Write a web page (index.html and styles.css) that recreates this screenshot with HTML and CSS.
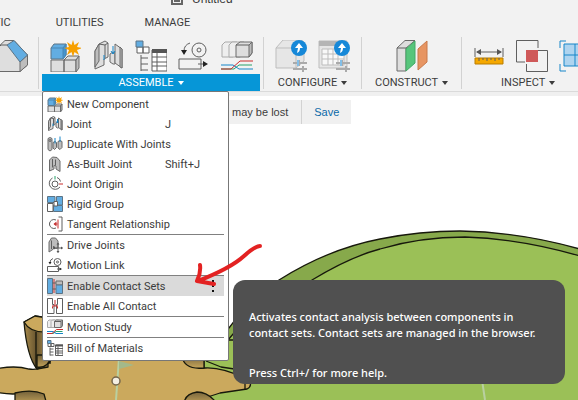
FILE: index.html
```html
<!DOCTYPE html>
<html lang="en">
<head>
<meta charset="utf-8">
<title>Untitled</title>
<meta name="viewport" content="width=device-width, initial-scale=1">
<link rel="stylesheet" href="styles.css">
</head>
<body>
<svg class="sprite" aria-hidden="true">
  <symbol id="component" viewBox="0 0 32 32">
    <path class="light" d="M2 20h13v12H2zM15 20l4-4h11l-3 4v12H15z"/>
    <path class="shade" d="M27 20l3-4v12l-3 4z"/><path class="line" d="M15 20h12"/>
    <path class="blue" d="M2 8l3-4h12v11l-3 4H2z"/><path class="deep" d="M14 8l3-4v11l-3 4z"/><path class="line-blue" d="M2 8h12"/>
    <path class="star" d="M24 0l1.500 5 4.500-3-2 5 5 1-5 2 2 5-4.500-3-1.500 5-1.500-5-4.500 3 2-5-5-2 5-1-2-5 4.500 3z"/>
  </symbol>
  <symbol id="joint" viewBox="0 0 32 32">
    <path class="light" d="M3 11l4-7 6-3 3 2v14l-4 2v6l-9 4z"/><path class="shade" d="M3 11l4-7v17l-4 6z"/><path class="line" d="M7 4l6 1 3-2M13 5v13"/>
    <path class="light" d="M18 14l3-2 2 1v11h-2l-3-2z"/><path class="light" d="M23 4l7 5v19l-7-5z"/><path class="shade" d="M28 7l2 2v19l-2-1z"/>
    <path class="line-accent" d="M12 15v5M21 6v8M19 11l2 3 2-3"/>
  </symbol>
  <symbol id="table" viewBox="0 0 32 32">
    <path class="white" d="M8 7h6v6H8zM2 7h6v6H2z"/><path class="blue" d="M1 1h7v6H1z"/>
    <path class="line" d="M6 15v16M6 18h7M6 24h7M6 30h7"/>
    <path class="white" d="M17 10h15v21H17z"/><path class="dark" d="M17 9h15v4H17z"/>
    <path class="line" d="M17 17h15M17 22h15M17 26h15M22 13v18"/>
  </symbol>
  <symbol id="link" viewBox="0 0 32 32">
    <circle class="line" cx="21" cy="10" r="7"/><circle class="line" cx="21" cy="10" r="2"/>
    <path class="line" d="M1 19h22v10H1zM20 24h7M12 3q-6 2-6 8"/>
    <path class="black" d="M3 10l3 5 3-5zM25 21l5 3-5 3z"/>
  </symbol>
  <symbol id="study" viewBox="0 0 32 32">
    <path class="ghost" d="M1 5l3-3h12v12l-4 3H1z"/><path class="ghost" d="M8 5l3-3h12v12l-4 3H8z"/>
    <path class="light" d="M15 5l4-3h12v11l-3 4H15z"/><path class="shade" d="M28 5l3-3v11l-3 4z"/><path class="line" d="M15 5h13"/>
    <path class="line-green" d="M0 29h13l5-4h13"/><path class="line-accent" d="M0 25h12l6 4h14"/><path class="line-red" d="M0 29h10l9-8h13"/>
  </symbol>
  <symbol id="duplicate" viewBox="0 0 32 32">
    <path class="shade" d="M2 5l4-2 4 2v22l-4 3-4-3zM12 13l4-2 3 2v10l-4 4-3-3zM22 11l4-2 4 2v12l-4 4-4-3z"/>
    <circle class="line" cx="6" cy="9" r="2"/><path class="line-accent" d="M16 4v11M26 1v11"/>
  </symbol>
  <symbol id="built" viewBox="0 0 32 32">
    <path class="shade" d="M5 8l6-6 9 1 6 7v21l-8-5v-6l-4-1v7l-9 4z"/><path class="line" d="M11 6v17M17 7v12"/>
  </symbol>
  <symbol id="origin" viewBox="0 0 32 32">
    <path class="line" d="M11 4A12 12 0 1 0 26 22M20 3q6 2 7 8"/><circle class="white" cx="16" cy="16" r="6"/>
    <path class="line-green" d="M16 0v7"/><path class="line-red" d="M24 16h8"/>
  </symbol>
  <symbol id="rigid" viewBox="0 0 32 32">
    <path class="blue" d="M1 1h15v12H1zM19 1h12v17H19zM13 19h18v12H13z"/><path class="white" d="M1 15h11v16H1zM14 11h7v9h-7z"/>
  </symbol>
  <symbol id="tangent" viewBox="0 0 32 32">
    <path class="line" d="M18 8A9 9 0 1 0 18 24M23 2h7v28h-7"/><path class="line-red" d="M22 7v18M14 16h7"/><path class="red" d="M13 16l6-5v10z"/>
  </symbol>
  <symbol id="drive" viewBox="0 0 32 32">
    <path class="shade" d="M4 10l5-8 8 0 5 6v14l-5 1-4-5v6l-9 6z"/><path class="line" d="M9 7v17M22 13v18M13 22h18"/>
    <path class="dark" d="M22 11l3 4h-6zM22 32l3-4h-6zM12 22l4-3v6zM32 22l-4-3v6z"/>
  </symbol>
  <symbol id="contact" viewBox="0 0 32 32">
    <path class="blue" d="M1 1h10v30H1z"/><path class="shade" d="M18 6h13v8H18z"/><path class="blue" d="M18 14h13v17H18z"/>
    <path class="line-red" d="M14 2v28"/><path class="line" d="M11 10h7M11 22h7"/>
  </symbol>
  <symbol id="all-contact" viewBox="0 0 32 32">
    <path class="white" d="M1 1h10v12h3v18H1zM21 1h10v30H19V13h2z"/><path class="line-red" d="M16 4v12M10 16h12M11 17v4M21 17v4"/>
  </symbol>
</svg>

<div class="app">
  <header class="chrome">
    <div class="titlebar">
      <svg class="doc" viewBox="0 0 12 12" aria-hidden="true"><path d="M1 0v11h10V0M3 5h6M3 8h6"/></svg>
      <span>Untitled</span>
    </div>
    <nav class="tabs">
      <a class="clipped" href="#">TIC</a><a href="#">UTILITIES</a><a href="#">MANAGE</a>
    </nav>
    <div class="ribbon">
      <section class="group solid">
        <button class="tool" aria-label="Solid tool">
          <svg viewBox="0 0 32 32"><path class="light" d="M0 9l9-8.500h9L31.500 15v10L24 31.500H0z"/><path class="shade" d="M24 22l7.500-7v10L24 31.500z"/><path class="blue" d="M11 5l7-4.500L31.500 15 24 22z"/><path class="line" d="M0 10l5-5h6"/></svg>
        </button>
      </section>
      <section class="group assemble">
        <div class="tools">
          <button class="tool" aria-label="New component"><svg><use href="#component"/></svg></button>
          <button class="tool" aria-label="Joint tool"><svg><use href="#joint"/></svg></button>
          <button class="tool" aria-label="Parts table"><svg><use href="#table"/></svg></button>
          <button class="tool" aria-label="Motion link tool"><svg><use href="#link"/></svg></button>
          <button class="tool" aria-label="Motion study tool"><svg><use href="#study"/></svg></button>
        </div>
        <button class="caption">ASSEMBLE<i></i></button>
      </section>
      <section class="group configure">
        <div class="tools">
          <button class="tool" aria-label="Configure design">
            <svg viewBox="0 0 32 32"><path class="faint" d="M1 8l7-8h18l3 2v19l-8 7H1zM1 8h20v20"/><path class="sliders" d="M18 23h14M24 20v6M18 29h14M28 26v6"/><path class="slider-mark" d="M23 20v6"/><circle class="badge" cx="24" cy="8" r="8"/><path class="arrow" d="M24 3l4 5h-3q0 4-3 5l1-5h-3z"/></svg>
          </button>
          <button class="tool" aria-label="Configuration table">
            <svg viewBox="0 0 32 32"><path class="faint" d="M1 1h28v27H1z"/><path class="gray" d="M1 1h28v5H1z"/><path class="grid" d="M4 9h22v16H4zM4 14h22M4 19h22M10 9v16M15 9v16M20 9v16"/><path class="sliders" d="M18 23h14M24 20v6M18 29h14M28 26v6"/><path class="slider-mark" d="M23 20v6"/><circle class="badge" cx="24" cy="8" r="8"/><path class="arrow" d="M24 3l4 5h-3q0 4-3 5l1-5h-3z"/></svg>
          </button>
        </div>
        <button class="caption">CONFIGURE<i></i></button>
      </section>
      <section class="group construct">
        <div class="tools">
          <button class="tool" aria-label="Offset plane">
            <svg viewBox="0 0 32 32"><path class="light" d="M1 8l8-7.500h10L10 8v23H1z"/><path class="line" d="M1 8h9"/><path class="green" d="M10 9l9-8v22l-9 8z"/><path class="orange" d="M22 9l9-8v21l-9 8z"/></svg>
          </button>
        </div>
        <button class="caption">CONSTRUCT<i></i></button>
      </section>
      <section class="group inspect">
        <div class="tools">
          <button class="tool" aria-label="Measure">
            <svg viewBox="0 0 32 32"><path class="line" d="M2 8v9M30 8v9M4 12h24"/><path class="dark" d="M3 12l5-3v6zM29 12l-5-3v6z"/><path class="ruler" d="M2 18h28v6H2z"/><path class="line" d="M6 18v3M10 18v2M14 18v3M18 18v2M22 18v3M26 18v2"/></svg>
          </button>
          <button class="tool" aria-label="Interference">
            <svg viewBox="0 0 32 32"><path class="line" d="M9 22H0.500V0.500H22V8M22 10.500h9.500v21H10.500V24"/><path class="overlap" d="M10 10h12v12H10z"/></svg>
          </button>
          <button class="tool" aria-label="Analysis">
            <svg viewBox="0 0 32 32"><path class="pale" d="M5 4h22v22H5z"/><path class="line-accent" d="M5 4h22v22H5zM5 15h22M16 4v22M1 8V1h6M1 24v7h6"/></svg>
          </button>
        </div>
        <button class="caption">INSPECT<i></i></button>
      </section>
    </div>
  </header>

  <main class="workspace">
    <div class="notice"><span>may be lost</span><a href="#">Save</a></div>
  </main>

  <svg class="scene" viewBox="0 0 578 400" preserveAspectRatio="xMinYMin slice" aria-hidden="true">
    <defs>
      <linearGradient id="wood" x2="1"><stop offset="0" stop-color="#a98b4c"/><stop offset=".5" stop-color="#695630"/><stop offset="1" stop-color="#ab8c4c"/></linearGradient>
      <linearGradient id="knob" x2="0" y2="1"><stop offset="0" stop-color="#74623b"/><stop offset="1" stop-color="#c7a65b"/></linearGradient>
    </defs>
    <path class="rim" d="M190 410V355Q210 340 229 328Q249 300 279 280Q328 249 380 239Q420 231 460 231Q525 232 590 252V410z"/>
    <path class="disc" d="M190 410V350L228 340Q260 300 312 280Q350 257 380 249Q420 237 465 237Q525 239 590 259V410z"/>
    <path class="edge" d="M205 340h30M206 361l15 6 20 3"/>
    <path class="wood" d="M-5 369Q15 365 29 369Q40 371 50 362V355H183Q190 369 205 368Q222 367 247 379Q254 385 247 389L220 393Q200 399 190 405H47Q42 393 28 392Q14 396 -5 392z"/>
    <path class="pillar" d="M24 322L35 316L48 318V367L37 369Q27 357 24 322z"/>
    <path class="wood" d="M24 322L35 316L48 318V332Q30 333 24 322z"/>
    <path class="edge" d="M36 332V368M50 364V355M204 357v11M245 380v9"/>
    <path class="knob" d="M37 367Q48 369 52 355H37zM182 356Q184 370 204 368V356z"/>
    <path class="knob" d="M15 405v-12q17-4 29 1l3 11zM184 405q0-11 13-13 12 0 21 13z"/>
    <path class="axis" d="M119 358l-3 42M482 380l3 20"/><path class="flag" d="M119 361l15 4-15 4z"/>
    <circle class="pin" cx="116" cy="381" r="4"/>
  </svg>

  <div class="menu" role="menu">
    <button role="menuitem"><svg><use href="#component"/></svg><span>New Component</span></button>
    <button role="menuitem"><svg><use href="#joint"/></svg><span>Joint</span><kbd>J</kbd></button>
    <button role="menuitem"><svg><use href="#duplicate"/></svg><span>Duplicate With Joints</span></button>
    <button role="menuitem"><svg><use href="#built"/></svg><span>As-Built Joint</span><kbd>Shift+J</kbd></button>
    <button role="menuitem"><svg><use href="#origin"/></svg><span>Joint Origin</span></button>
    <button role="menuitem"><svg><use href="#rigid"/></svg><span>Rigid Group</span></button>
    <button role="menuitem"><svg><use href="#tangent"/></svg><span>Tangent Relationship</span></button>
    <hr>
    <button role="menuitem"><svg><use href="#drive"/></svg><span>Drive Joints</span></button>
    <button role="menuitem"><svg><use href="#link"/></svg><span>Motion Link</span></button>
    <hr>
    <button role="menuitem" class="active"><svg><use href="#contact"/></svg><span>Enable Contact Sets</span><b class="more"></b></button>
    <button role="menuitem"><svg><use href="#all-contact"/></svg><span>Enable All Contact</span></button>
    <hr>
    <button role="menuitem"><svg><use href="#study"/></svg><span>Motion Study</span></button>
    <hr>
    <button role="menuitem"><svg><use href="#table"/></svg><span>Bill of Materials</span></button>
  </div>

  <div class="tooltip" role="tooltip">
    <p>Activates contact analysis between components in contact sets. Contact sets are managed in the browser.</p>
    <p>Press Ctrl+/ for more help.</p>
  </div>
  <svg class="pointer" viewBox="0 0 70 44" aria-hidden="true"><path d="M67 4Q62 4 51 14Q38 26 5 39M7 23Q8 31 4 39L21 42"/></svg>
</div>
</body>
</html>
```
FILE: styles.css
```css
* { box-sizing: border-box; }
body { margin: 0; background: #fff; color: #3c3c3c; font: 11px/20px Roboto, "Liberation Sans", sans-serif; }
button { padding: 0; border: 0; background: none; color: inherit; font: inherit; }
a { color: inherit; text-decoration: none; }
.app { position: relative; min-height: 100vh; overflow: hidden; }
.sprite { position: absolute; width: 0; height: 0; }

.chrome { background: #f2f2f2; border-bottom: 4px solid #f0f0f0; }
.titlebar { display: flex; align-items: flex-end; gap: 9px; height: 6px; padding-left: 171px; overflow: hidden; font: 12px/14px "Liberation Sans", sans-serif; }
.doc { width: 12px; height: 12px; flex: none; margin-bottom: 1px; }
.doc path { fill: none; stroke: #666; stroke-width: 2; }
.tabs { display: flex; gap: 41px; height: 31px; padding: 7px 0 0; }
.tabs .clipped { margin-left: -6px; padding-right: 4px; }
.ribbon { display: flex; height: 55px; border-bottom: 1px solid #dadada; }
.group { display: flex; flex: none; flex-direction: column; align-items: center; height: 52px; border-right: 1px solid #d2d2d2; }
.group:last-child { border-right: 0; }
.solid { margin-left: -4px; padding-right: 10px; }
.assemble { padding: 0 3px; }
.configure, .inspect { padding: 0 11px; }
.construct { padding: 0 13px; }
.tools { display: flex; gap: 11px; }
.tool { display: block; width: 32px; height: 37px; }
.tool svg { display: block; width: 32px; height: 32px; }
.caption { display: flex; align-items: center; justify-content: center; gap: 4px; height: 17px; line-height: 19px; }
.caption i { border: 3px solid transparent; border-top: 4px solid currentColor; border-bottom: 0; }
.assemble .caption { width: 218px; background: #0696d7; color: #fff; }
.inspect .caption { padding-right: 8px; }

.notice { display: inline-flex; margin: 4px 0 0 43px; background: #f0f0f0; font: 11px/24px "Liberation Sans", sans-serif; }
.notice span { padding: 0 13px 0 189px; border-right: 1px solid #d2d2d2; }
.notice a { padding: 0 12px; color: #0b69a8; }

.menu { position: absolute; top: 91px; left: 42px; width: 187px; padding: 2px 4px; border: 1px solid #777; border-radius: 2px; background: #fff; }
.menu button { display: grid; grid-template-columns: 20px 98px 1fr; width: 100%; height: 20px; align-items: center; text-align: left; white-space: nowrap; }
.menu svg { width: 16px; height: 16px; }
.menu kbd { font: inherit; }
.menu span, .menu kbd { line-height: 18px; padding-top: 2px; }
.menu hr { height: 1px; margin: 0; border: 0; background: #808080; }
.menu .active { background: #dadada; }
.more { justify-self: end; width: 2px; height: 12px; margin-right: 10px; background: repeating-linear-gradient(#111 0 2px, transparent 2px 5px); }

.tooltip { position: absolute; top: 280px; left: 233px; width: 332px; padding: 29px 16px 3px; border-radius: 12px; background: #505050; color: #fff; font: 500 11px/16px "Noto Sans", "Open Sans", sans-serif; }
.tooltip p { margin: 0; }
.tooltip p + p { margin-top: 24px; }
.pointer { position: absolute; top: 242px; left: 193px; width: 70px; height: 44px; }
.pointer path { fill: none; stroke: #e32222; stroke-width: 4; stroke-linecap: round; stroke-linejoin: round; }

.scene { position: absolute; inset: 0; width: 100%; height: 100%; pointer-events: none; }
.scene path { stroke: #17180c; stroke-width: 1.300; stroke-linejoin: round; }
.scene .rim { fill: #87a94b; }
.scene .disc { fill: #9bc057; }
.scene .wood { fill: #cba95d; }
.scene .pillar { fill: url(#wood); }
.scene .knob { fill: url(#knob); }
.scene .edge { fill: none; }
.scene .axis { fill: none; stroke: #b9d0a0; stroke-width: 2; }
.scene .flag { fill: #a3b98a; stroke: none; }
.pin { fill: #f4efe2; stroke: #75664a; stroke-width: 1.500; }

symbol *, .tool path { vector-effect: non-scaling-stroke; }
.light { fill: #dedede; stroke: #6a6a6a; }
.shade { fill: #bdbdbd; stroke: #6a6a6a; }
.white { fill: #fff; stroke: #5f5f5f; }
.ghost { fill: #eee; stroke: #aaa; }
.blue { fill: #62ade2; stroke: #5c7486; }
.deep { fill: #4594ce; stroke: #4886b2; }
.dark { fill: #555; }
.black { fill: #222; }
.red { fill: #c43535; }
.star { fill: #f7a000; }
.line, .line-blue, .line-accent, .line-green, .line-red { fill: none; stroke: #5f5f5f; }
.line-blue { stroke: #4886b2; }
.line-accent { stroke: #1686c9; }
.line-green { stroke: #29a06b; }
.line-red { stroke: #c92d2d; }
.faint { fill: #e6e6e6; stroke: #bdbdbd; }
.gray { fill: #b5b5b5; }
.grid { fill: #f8f8f8; stroke: #bdbdbd; }
.sliders { fill: none; stroke: #aaa; stroke-width: 2; }
.slider-mark { stroke: #83bfe8; stroke-width: 2; }
.badge { fill: #1688d8; }
.arrow { fill: #fff; }
.green { fill: #56c57b; stroke: #42a967; }
.orange { fill: #e79562; stroke: #c8794b; }
.ruler { fill: #f5a800; stroke: #b97c00; }
.overlap { fill: #cf5959; }
.pale { fill: #aed4ef; }
```
